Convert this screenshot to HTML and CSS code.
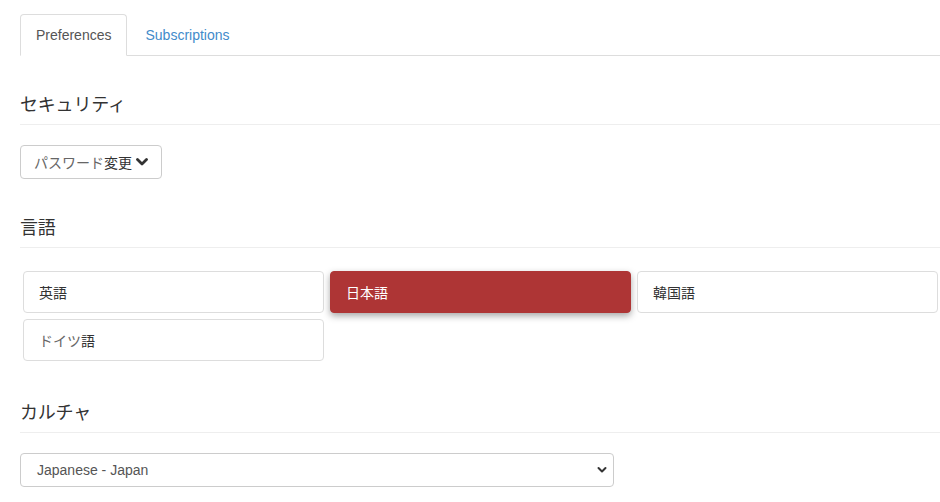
FILE: index.html
```html
<!DOCTYPE html>
<html lang="ja">
<head>
<meta charset="utf-8">
<link rel="stylesheet" href="styles.css">
</head>
<body>
<div class="page">
  <ul class="tabs">
    <li class="tab active">Preferences</li>
    <li class="tab link">Subscriptions</li>
  </ul>

  <section class="section">
    <h4 class="section-title">セキュリティ</h4>
    <button class="btn-default"><span class="kana">パスワード</span>変更<svg class="chev" viewBox="0 0 12 10" width="12" height="10"><path d="M1.5 2.5 L6 7 L10.5 2.5" fill="none" stroke="#333" stroke-width="2.8" stroke-linecap="round" stroke-linejoin="round"/></svg></button>
  </section>

  <section class="section">
    <h4 class="section-title">言語</h4>
    <div class="lang-grid">
      <div class="lang">英語</div>
      <div class="lang selected">日本語</div>
      <div class="lang">韓国語</div>
      <div class="lang"><span class="kana">ドイツ</span>語</div>
    </div>
  </section>

  <section class="section">
    <h4 class="section-title">カルチャ</h4>
    <div class="select">
      <span>Japanese - Japan</span>
      <svg viewBox="0 0 10 8" width="10" height="8"><path d="M1.5 2 L5 5.5 L8.5 2" fill="none" stroke="#333" stroke-width="2" stroke-linecap="round" stroke-linejoin="round"/></svg>
    </div>
  </section>
</div>
</body>
</html>
```

FILE: styles.css
```css
* { box-sizing: border-box; }
html, body { margin: 0; padding: 0; background: #fff; }
body {
  font-family: "Liberation Sans", Arial, "Noto Sans CJK JP", sans-serif;
  font-size: 14px;
  color: #333;
}
.page {
  padding: 14px 0 0 20px;
}
.tabs {
  list-style: none;
  margin: 0;
  padding: 0;
  display: flex;
  border-bottom: 1px solid #ddd;
  height: 42px;
}
.tab {
  height: 42px;
  padding: 0 15px;
  line-height: 40px;
  border: 1px solid transparent;
  border-radius: 4px 4px 0 0;
  margin-right: 2px;
}
.tab.active {
  border-color: #ddd;
  border-bottom-color: #fff;
  background: #fff;
  color: #555;
}
.tab.link {
  color: #428bca;
  padding: 0 15px;
}
.section-title {
  margin: 37px 0 20px;
  font-family: "Noto Sans CJK JP", sans-serif;
  font-weight: 400;
  font-size: 18px;
  line-height: 20px;
  padding-bottom: 11px;
  border-bottom: 1px solid #eee;
  color: #333;
  letter-spacing: -0.2px;
}
.kana { color: #666; }
.btn-default {
  display: inline-flex;
  align-items: center;
  height: 34px;
  padding: 0 13px;
  background: #fff;
  border: 1px solid #ccc;
  border-radius: 4px;
  font-family: "Noto Sans CJK JP", sans-serif;
  font-size: 14px;
  color: #333;
}
.chev { margin-left: 4px; }
.lang-grid {
  display: grid;
  grid-template-columns: repeat(3, 1fr);
  margin-right: -1px;
}
.lang {
  margin: 3px;
  height: 42px;
  border: 1px solid #ddd;
  border-radius: 4px;
  padding: 0 15px;
  display: flex;
  align-items: center;
  font-family: "Noto Sans CJK JP", sans-serif;
  font-size: 14px;
  color: #333;
  background: #fff;
}
.lang.selected {
  background: #ae3535;
  border-color: #ae3535;
  color: #fff;
  box-shadow: 0 3px 7px rgba(0, 0, 0, 0.35);
}
.select {
  width: 594px;
  height: 34px;
  border: 1px solid #ccc;
  border-radius: 4px;
  display: flex;
  align-items: center;
  justify-content: space-between;
  padding: 0 6px 0 16px;
  color: #555;
  font-size: 14px;
}
```
